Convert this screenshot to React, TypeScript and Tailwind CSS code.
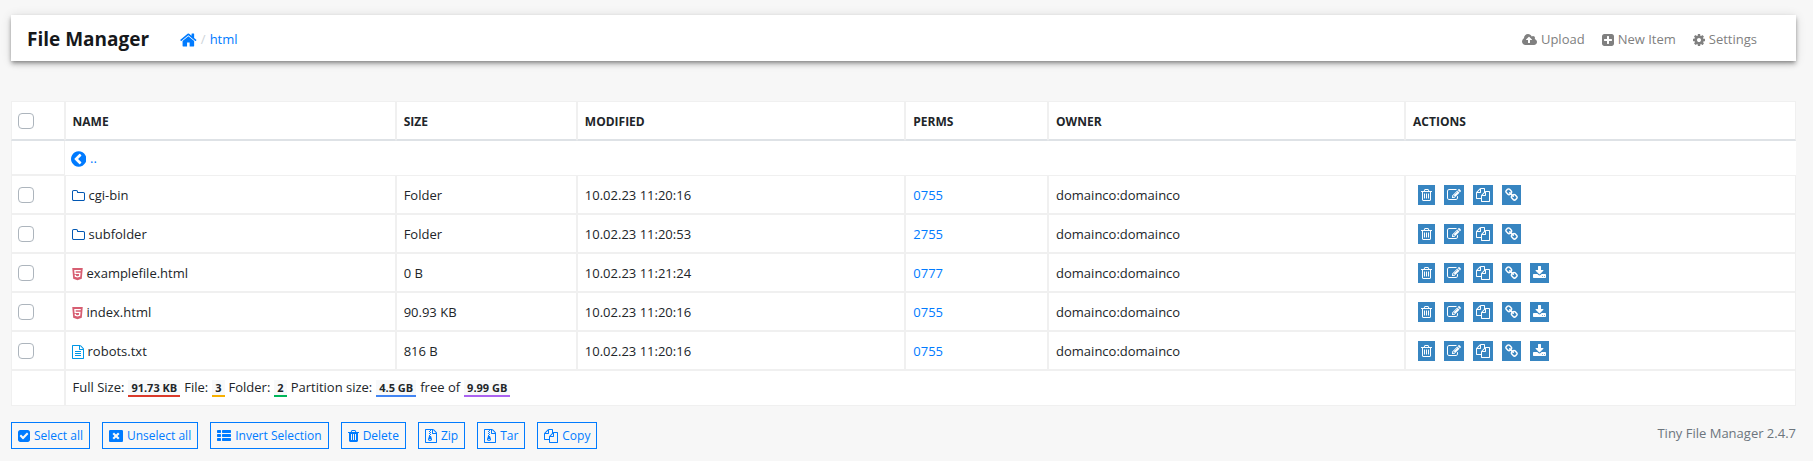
import React from 'react';
import clsx from 'clsx';
import { FaHtml5 } from 'react-icons/fa';

type IconName =
  | 'home' | 'back' | 'upload' | 'plus' | 'cog' | 'folder' | 'text' | 'trashOutline' | 'edit'
  | 'copy' | 'link' | 'download' | 'check' | 'close' | 'list' | 'trash' | 'archive';

// viewBox left edge and width, then the outline; all glyphs share a 1792 unit em
const ICONS: Record<IconName, [number, number, string]> = {
  home: [64, 1664, 'M1472 992v480q0 26-19 45t-45 19h-384v-384h-256v384h-384q-26 0-45-19t-19-45v-480q0-1 .5-3t.5-3l575-474 575 474q1 2 1 6zm223-69l-62 74q-8 9-21 11h-3q-13 0-21-7l-692-577-692 577q-12 8-24 7-13-2-21-11l-62-74q-8-10-7-23.5t11-21.5l719-599q32-26 76-26t76 26l244 204v-195q0-14 9-23t23-9h192q14 0 23 9t9 23v408l219 182q10 8 11 21.5t-7 23.5z'],
  back: [128, 1536, 'M1037 1395l102-102q19-19 19-45t-19-45l-307-307 307-307q19-19 19-45t-19-45l-102-102q-19-19-45-19t-45 19l-454 454q-19 19-19 45t19 45l454 454q19 19 45 19t45-19zm627-499q0 209-103 385.5t-279.5 279.5-385.5 103-385.5-103-279.5-279.5-103-385.5 103-385.5 279.5-279.5 385.5-103 385.5 103 279.5 279.5 103 385.5z'],
  upload: [-64, 1920, 'M1216 864q0-14-9-23l-352-352q-9-9-23-9t-23 9l-351 351q-10 12-10 24 0 14 9 23t23 9h224v352q0 13 9.5 22.5t22.5 9.5h192q13 0 22.5-9.5t9.5-22.5v-352h224q13 0 22.5-9.5t9.5-22.5zm640 288q0 159-112.5 271.5t-271.5 112.5h-1088q-185 0-316.5-131.5t-131.5-316.5q0-130 70-240t188-165q-2-30-2-43 0-212 150-362t362-150q156 0 285.5 87t188.5 231q71-62 166-62 106 0 181 75t75 181q0 76-41 138 130 31 213.5 135.5t83.5 238.5z'],
  plus: [128, 1536, 'M1408 960v-128q0-26-19-45t-45-19h-320v-320q0-26-19-45t-45-19h-128q-26 0-45 19t-19 45v320h-320q-26 0-45 19t-19 45v128q0 26 19 45t45 19h320v320q0 26 19 45t45 19h128q26 0 45-19t19-45v-320h320q26 0 45-19t19-45zm256-544v960q0 119-84.5 203.5t-203.5 84.5h-960q-119 0-203.5-84.5t-84.5-203.5v-960q0-119 84.5-203.5t203.5-84.5h960q119 0 203.5 84.5t84.5 203.5z'],
  cog: [128, 1536, 'M1152 896q0-106-75-181t-181-75-181 75-75 181 75 181 181 75 181-75 75-181zm512-109v222q0 12-8 23t-20 13l-185 28q-19 54-39 91 35 50 107 138 10 12 10 25t-9 23q-27 37-99 108t-94 71q-12 0-26-9l-138-108q-44 23-91 38-16 136-29 186-7 28-36 28h-222q-14 0-24.5-8.5t-11.5-21.5l-28-184q-49-16-90-37l-141 107q-10 9-25 9-14 0-25-11-126-114-165-168-7-10-7-23 0-12 8-23 15-21 51-66.5t54-70.5q-27-50-41-99l-183-27q-13-2-21-12.5t-8-23.5v-222q0-12 8-23t19-13l186-28q14-46 39-92-40-57-107-138-10-12-10-24 0-10 9-23 26-36 98.5-107.5t94.5-71.5q13 0 26 10l138 107q44-23 91-38 16-136 29-186 7-28 36-28h222q14 0 24.5 8.5t11.5 21.5l28 184q49 16 90 37l142-107q9-9 24-9 13 0 25 10 129 119 165 170 7 8 7 22 0 12-8 23-15 21-51 66.5t-54 70.5q26 50 41 98l183 28q13 2 21 12.5t8 23.5z'],
  folder: [64, 1664, 'M1600 1312v-704q0-40-28-68t-68-28h-704q-40 0-68-28t-28-68v-64q0-40-28-68t-68-28h-320q-40 0-68 28t-28 68v960q0 40 28 68t68 28h1216q40 0 68-28t28-68zm128-704v704q0 92-66 158t-158 66h-1216q-92 0-158-66t-66-158v-960q0-92 66-158t158-66h320q92 0 158 66t66 158v32h672q92 0 158 66t66 158z'],
  text: [128, 1536, 'M1596 380q28 28 48 76t20 88v1152q0 40-28 68t-68 28h-1344q-40 0-68-28t-28-68v-1600q0-40 28-68t68-28h896q40 0 88 20t76 48zm-444-244v376h376q-10-29-22-41l-313-313q-12-12-41-22zm384 1528v-1024h-416q-40 0-68-28t-28-68v-416h-768v1536h1280zm-1024-864q0-14 9-23t23-9h704q14 0 23 9t9 23v64q0 14-9 23t-23 9h-704q-14 0-23-9t-9-23v-64zm736 224q14 0 23 9t9 23v64q0 14-9 23t-23 9h-704q-14 0-23-9t-9-23v-64q0-14 9-23t23-9h704zm0 256q14 0 23 9t9 23v64q0 14-9 23t-23 9h-704q-14 0-23-9t-9-23v-64q0-14 9-23t23-9h704z'],
  trashOutline: [192, 1408, 'M704 736v576q0 14-9 23t-23 9h-64q-14 0-23-9t-9-23v-576q0-14 9-23t23-9h64q14 0 23 9t9 23zm256 0v576q0 14-9 23t-23 9h-64q-14 0-23-9t-9-23v-576q0-14 9-23t23-9h64q14 0 23 9t9 23zm256 0v576q0 14-9 23t-23 9h-64q-14 0-23-9t-9-23v-576q0-14 9-23t23-9h64q14 0 23 9t9 23zm128 724v-948h-896v948q0 22 7 40.5t14.5 27 10.5 8.5h832q3 0 10.5-8.5t14.5-27 7-40.5zm-672-1076h448l-48-117q-7-9-17-11h-317q-10 2-17 11zm928 32v64q0 14-9 23t-23 9h-96v948q0 83-47 143.5t-113 60.5h-832q-66 0-113-58.5t-47-141.5v-952h-96q-14 0-23-9t-9-23v-64q0-14 9-23t23-9h309l70-167q15-37 54-63t79-26h320q40 0 79 26t54 63l70 167h309q14 0 23 9t9 23z'],
  edit: [0, 1792, 'M888 1184l116-116-152-152-116 116v56h96v96h56zm440-720q-16-16-33 1l-350 350q-17 17-1 33t33-1l350-350q17-17 1-33zm80 594v190q0 119-84.5 203.5t-203.5 84.5h-832q-119 0-203.5-84.5t-84.5-203.5v-832q0-119 84.5-203.5t203.5-84.5h832q63 0 117 25 15 7 18 23 3 17-9 29l-49 49q-14 14-32 8-23-6-45-6h-832q-66 0-113 47t-47 113v832q0 66 47 113t113 47h832q66 0 113-47t47-113v-126q0-13 9-22l64-64q15-15 35-7t20 29zm-96-738l288 288-672 672h-288v-288zm444 132l-92 92-288-288 92-92q28-28 68-28t68 28l152 152q28 28 28 68t-28 68z'],
  copy: [0, 1792, 'M1696 384q40 0 68 28t28 68v1216q0 40-28 68t-68 28h-960q-40 0-68-28t-28-68v-288h-544q-40 0-68-28t-28-68v-672q0-40 20-88t48-76l408-408q28-28 76-48t88-20h416q40 0 68 28t28 68v328q68-40 128-40h416zm-544 213l-299 299h299v-299zm-640-384l-299 299h299v-299zm196 647l316-316v-416h-384v416q0 40-28 68t-68 28h-416v640h512v-256q0-40 20-88t48-76zm956 804v-1152h-384v416q0 40-28 68t-68 28h-416v640h896z'],
  link: [64, 1664, 'M1520 1216q0-40-28-68l-208-208q-28-28-68-28-42 0-72 32 3 3 19 18.5t21.5 21.5 15 19 13 25.5 3.5 27.5q0 40-28 68t-68 28q-15 0-27.5-3.5t-25.5-13-19-15-21.5-21.5-18.5-19q-33 31-33 73 0 40 28 68l206 207q27 27 68 27 40 0 68-26l147-146q28-28 28-67zm-703-705q0-40-28-68l-206-207q-28-28-68-28-39 0-68 27l-147 146q-28 28-28 67 0 40 28 68l208 208q27 27 68 27 42 0 72-31-3-3-19-18.5t-21.5-21.5-15-19-13-25.5-3.5-27.5q0-40 28-68t68-28q15 0 27.5 3.5t25.5 13 19 15 21.5 21.5 18.5 19q33-31 33-73zm895 705q0 120-85 203l-147 146q-83 83-203 83-121 0-204-85l-206-207q-83-83-83-203 0-123 88-209l-88-88q-86 88-208 88-120 0-204-84l-208-208q-84-84-84-204t85-203l147-146q83-83 203-83 121 0 204 85l206 207q83 83 83 203 0 123-88 209l88 88q86-88 208-88 120 0 204 84l208 208q84 84 84 204z'],
  download: [64, 1664, 'M1344 1344q0-26-19-45t-45-19-45 19-19 45 19 45 45 19 45-19 19-45zm256 0q0-26-19-45t-45-19-45 19-19 45 19 45 45 19 45-19 19-45zm128-224v320q0 40-28 68t-68 28h-1472q-40 0-68-28t-28-68v-320q0-40 28-68t68-28h465l135 136q58 56 136 56t136-56l136-136h464q40 0 68 28t28 68zm-325-569q17 41-14 70l-448 448q-18 19-45 19t-45-19l-448-448q-31-29-14-70 17-39 59-39h256v-448q0-26 19-45t45-19h256q26 0 45 19t19 45v448h256q42 0 59 39z'],
  check: [128, 1536, 'M813 1299l614-614q19-19 19-45t-19-45l-102-102q-19-19-45-19t-45 19l-467 467-211-211q-19-19-45-19t-45 19l-102 102q-19 19-19 45t19 45l358 358q19 19 45 19t45-19zm851-883v960q0 119-84.5 203.5t-203.5 84.5h-960q-119 0-203.5-84.5t-84.5-203.5v-960q0-119 84.5-203.5t203.5-84.5h960q119 0 203.5 84.5t84.5 203.5z'],
  close: [0, 1792, 'M1175 1321l146-146q10-10 10-23t-10-23l-233-233 233-233q10-10 10-23t-10-23l-146-146q-10-10-23-10t-23 10l-233 233-233-233q-10-10-23-10t-23 10l-146 146q-10 10-10 23t10 23l233 233-233 233q-10 10-10 23t10 23l146 146q10 10 23 10t23-10l233-233 233 233q10 10 23 10t23-10zm617-1033v1216q0 66-47 113t-113 47h-1472q-66 0-113-47t-47-113v-1216q0-66 47-113t113-47h1472q66 0 113 47t47 113z'],
  list: [0, 1792, 'M512 1248v192q0 40-28 68t-68 28h-320q-40 0-68-28t-28-68v-192q0-40 28-68t68-28h320q40 0 68 28t28 68zm0-512v192q0 40-28 68t-68 28h-320q-40 0-68-28t-28-68v-192q0-40 28-68t68-28h320q40 0 68 28t28 68zm1280 512v192q0 40-28 68t-68 28h-960q-40 0-68-28t-28-68v-192q0-40 28-68t68-28h960q40 0 68 28t28 68zm-1280-1024v192q0 40-28 68t-68 28h-320q-40 0-68-28t-28-68v-192q0-40 28-68t68-28h320q40 0 68 28t28 68zm1280 512v192q0 40-28 68t-68 28h-960q-40 0-68-28t-28-68v-192q0-40 28-68t68-28h960q40 0 68 28t28 68zm0-512v192q0 40-28 68t-68 28h-960q-40 0-68-28t-28-68v-192q0-40 28-68t68-28h960q40 0 68 28t28 68z'],
  trash: [192, 1408, 'M704 1376v-704q0-14-9-23t-23-9h-64q-14 0-23 9t-9 23v704q0 14 9 23t23 9h64q14 0 23-9t9-23zm256 0v-704q0-14-9-23t-23-9h-64q-14 0-23 9t-9 23v704q0 14 9 23t23 9h64q14 0 23-9t9-23zm256 0v-704q0-14-9-23t-23-9h-64q-14 0-23 9t-9 23v704q0 14 9 23t23 9h64q14 0 23-9t9-23zm-544-992h448l-48-117q-7-9-17-11h-317q-10 2-17 11zm928 32v64q0 14-9 23t-23 9h-96v948q0 83-47 143.5t-113 60.5h-832q-66 0-113-58.5t-47-141.5v-952h-96q-14 0-23-9t-9-23v-64q0-14 9-23t23-9h309l70-167q15-37 54-63t79-26h320q40 0 79 26t54 63l70 167h309q14 0 23 9t9 23z'],
  archive: [128, 1536, 'M768 384v-128h-128v128h128zm128 128v-128h-128v128h128zm-128 128v-128h-128v128h128zm128 128v-128h-128v128h128zm700-388q28 28 48 76t20 88v1152q0 40-28 68t-68 28h-1344q-40 0-68-28t-28-68v-1600q0-40 28-68t68-28h896q40 0 88 20t76 48zm-444-244v376h376q-10-29-22-41l-313-313q-12-12-41-22zm384 1528v-1024h-416q-40 0-68-28t-28-68v-416h-128v128h-128v-128h-512v1536h1280zm-627-721l107 349q8 27 8 52 0 83-72.5 137.5t-183.5 54.5-183.5-54.5-72.5-137.5q0-25 8-52 21-63 120-396v-128h128v128h79q22 0 39 13t23 34zm-141 465q53 0 90.5-19t37.5-45-37.5-45-90.5-19-90.5 19-37.5 45 37.5 45 90.5 19z'],
};

const Icon: React.FC<{ name: IconName; className?: string }> = ({ name, className = 'h-3.5' }) => {
  const [x, width, path] = ICONS[name];
  return (
    <svg viewBox={`${x} 0 ${width} 1792`} className={clsx('shrink-0 w-auto', className)} fill="currentColor" aria-hidden="true">
      <path d={path} />
    </svg>
  );
};

interface Entry {
  name: string;
  kind: 'folder' | 'html' | 'text';
  size: string;
  modified: string;
  perms: string;
}

const entries: Entry[] = [
  { name: 'cgi-bin', kind: 'folder', size: 'Folder', modified: '10.02.23 11:20:16', perms: '0755' },
  { name: 'subfolder', kind: 'folder', size: 'Folder', modified: '10.02.23 11:20:53', perms: '2755' },
  { name: 'examplefile.html', kind: 'html', size: '0 B', modified: '10.02.23 11:21:24', perms: '0777' },
  { name: 'index.html', kind: 'html', size: '90.93 KB', modified: '10.02.23 11:20:16', perms: '0755' },
  { name: 'robots.txt', kind: 'text', size: '816 B', modified: '10.02.23 11:20:16', perms: '0755' },
];

const navItems: { icon: IconName; label: string }[] = [
  { icon: 'upload', label: 'Upload' },
  { icon: 'plus', label: 'New Item' },
  { icon: 'cog', label: 'Settings' },
];

const rowActions: { icon: IconName; label: string }[] = [
  { icon: 'trashOutline', label: 'Delete' },
  { icon: 'edit', label: 'Rename' },
  { icon: 'copy', label: 'Copy' },
  { icon: 'link', label: 'Direct link' },
  { icon: 'download', label: 'Download' },
];

const bulkActions: { icon: IconName; label: string }[] = [
  { icon: 'check', label: 'Select all' },
  { icon: 'close', label: 'Unselect all' },
  { icon: 'list', label: 'Invert Selection' },
  { icon: 'trash', label: 'Delete' },
  { icon: 'archive', label: 'Zip' },
  { icon: 'archive', label: 'Tar' },
  { icon: 'copy', label: 'Copy' },
];

const stats = [
  { label: 'Full Size:', value: '91.73 KB', border: 'border-[#db3a2a]' },
  { label: 'File:', value: '3', border: 'border-[#f8b000]' },
  { label: 'Folder:', value: '2', border: 'border-[#00b75a]' },
  { label: 'Partition size:', value: '4.5 GB', border: 'border-[#4285f4]' },
  { label: 'free of', value: '9.99 GB', border: 'border-[#ab63f0]' },
];

const cell = 'border border-[#f0f0f0] px-1.5';
const textCell = 'border border-[#f0f0f0] px-[7px] pt-0.5';

const Checkbox: React.FC<{ label: string }> = ({ label }) => (
  <input
    type="checkbox"
    aria-label={label}
    className="block size-4 appearance-none rounded border border-[#adb5bd] bg-white checked:bg-[#007bff]"
  />
);

const EntryIcon: React.FC<{ kind: Entry['kind'] }> = ({ kind }) => {
  if (kind === 'folder') return <Icon name="folder" className="h-3.5 text-[#0157b3]" />;
  if (kind === 'html') return <FaHtml5 className="h-3.5 w-[11px] text-[#d75e72]" />;
  return <Icon name="text" className="h-3.5 text-[#0096e6]" />;
};

const App: React.FC = () => {
  return (
    <div className="min-h-screen bg-[#f7f7f7] pt-[15px] pr-[17px] pb-1 pl-[11px] font-['Open_Sans',sans-serif] text-[13px] text-[#212529]">
      <nav className="flex h-[46px] items-center bg-white pt-[3px] pr-[39px] pl-4 shadow-[0_4px_5px_0_rgba(0,0,0,0.14),0_1px_10px_0_rgba(0,0,0,0.12),0_2px_4px_-1px_rgba(0,0,0,0.4)]">
        <a href="#" className="text-[19px] font-bold text-[#16181b]">File Manager</a>
        <div className="ml-[31px] flex items-center gap-1 text-[#007bff]">
          <a href="#" aria-label="Home"><Icon name="home" className="h-[18px]" /></a>
          <span className="text-[#ced4da]">/</span>
          <a href="#">html</a>
        </div>
        <div className="ml-auto flex items-center gap-[17px] text-[#808080]">
          {navItems.map((item) => (
            <a key={item.label} href="#" className="flex items-center gap-1">
              <Icon name={item.icon} />
              {item.label}
            </a>
          ))}
        </div>
      </nav>

      <table className="mt-10 w-full table-fixed border-separate border-spacing-0 bg-white text-left">
        <colgroup>
          <col className="w-[3%]" />
          <col className="w-[18.55%]" />
          <col className="w-[10.15%]" />
          <col className="w-[18.4%]" />
          <col className="w-[8%]" />
          <col className="w-[20%]" />
          <col />
        </colgroup>
        <thead>
          <tr className="h-10 text-xs uppercase">
            <th className={clsx(cell, 'border-b-2 border-b-[#dee2e6]')}><Checkbox label="Select all files" /></th>
            {['Name', 'Size', 'Modified', 'Perms', 'Owner', 'Actions'].map((title) => (
              <th key={title} className={clsx(textCell, 'border-b-2 border-b-[#dee2e6] font-bold')}>{title}</th>
            ))}
          </tr>
        </thead>
        <tbody>
          <tr className="h-[34px]">
            <td className={clsx(cell, 'border-t-0')} />
            <td colSpan={6} className="px-1.5 pt-0.5">
              <a href="#" className="flex items-center gap-1 text-[#007bff]">
                <Icon name="back" className="h-[18px]" />
                ..
              </a>
            </td>
          </tr>
          {entries.map((entry) => (
            <tr key={entry.name} className="h-[39px]">
              <td className={cell}><Checkbox label={entry.name} /></td>
              <td className={clsx(cell, 'pt-0.5')}>
                <a href="#" className="flex items-center gap-1">
                  <EntryIcon kind={entry.kind} />
                  {entry.name}
                </a>
              </td>
              <td className={textCell}>{entry.size}</td>
              <td className={textCell}>{entry.modified}</td>
              <td className={textCell}><a href="#" className="text-[#007bff]">{entry.perms}</a></td>
              <td className={textCell}>domainco:domainco</td>
              <td className={cell}>
                <div className="flex gap-[9px] pl-1.5">
                  {rowActions
                    .filter((action) => entry.kind !== 'folder' || action.icon !== 'download')
                    .map((action) => (
                      <a key={action.icon} href="#" aria-label={action.label} className="bg-[#3785c1] p-[3px] text-white">
                        <Icon name={action.icon} />
                      </a>
                    ))}
                </div>
              </td>
            </tr>
          ))}
        </tbody>
        <tfoot>
          <tr className="h-9">
            <td className={cell} />
            <td colSpan={6} className="border border-[#f0f0f0] px-[7px]">
              <div className="flex items-center gap-1">
                {stats.map((stat) => (
                  <React.Fragment key={stat.label}>
                    <span>{stat.label}</span>
                    <span className={clsx('border-b-2 bg-[#f8f9fa] px-[3px] text-[11px] leading-[15px] font-bold', stat.border)}>
                      {stat.value}
                    </span>
                  </React.Fragment>
                ))}
              </div>
            </td>
          </tr>
        </tfoot>
      </table>

      <div className="mt-4 flex items-start justify-between">
        <div className="flex gap-3 text-xs text-[#007bff]">
          {bulkActions.map((action) => (
            <button key={action.label} type="button" className="flex h-[27px] items-center gap-1 border border-[#007bff] px-1.5">
              <Icon name={action.icon} />
              {action.label}
            </button>
          ))}
        </div>
        <a href="#" className="pt-0.5 text-[#6c757d]">Tiny File Manager 2.4.7</a>
      </div>
    </div>
  );
};

export default App;
